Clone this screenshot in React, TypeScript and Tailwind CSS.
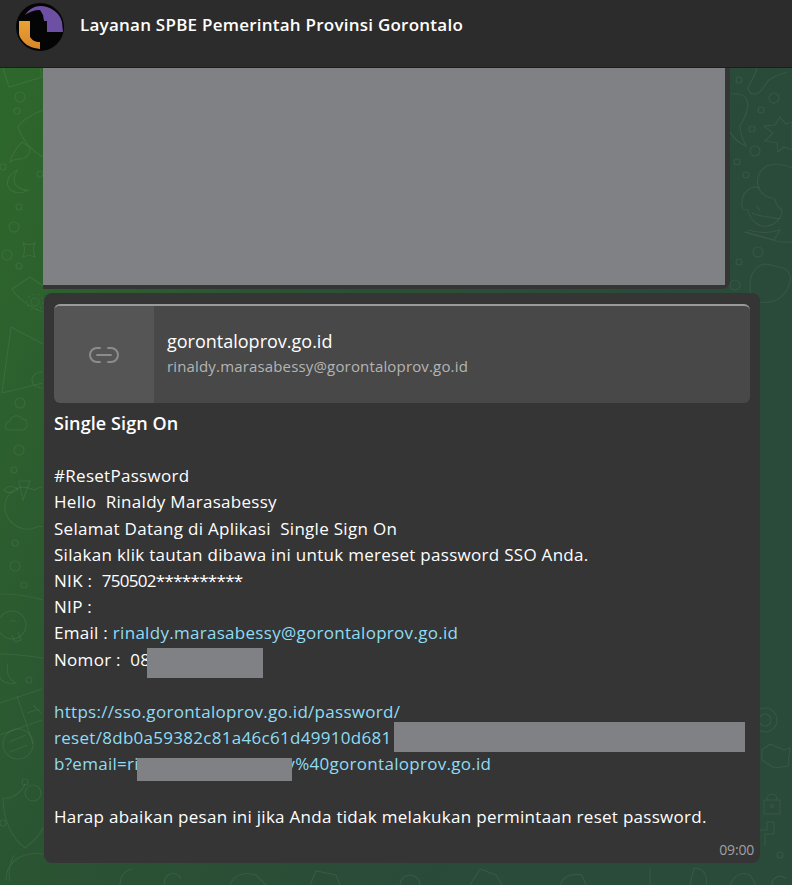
const font = { fontFamily: '"Open Sans", "Noto Sans", sans-serif' };

function Doodles() {
  // wallpaper doodles, only the strips beside the bubbles can be seen
  return (
    <svg className="absolute inset-0 h-full w-full" aria-hidden="true">
      <g transform="translate(0 -68)" fill="none" stroke="#ffffff" strokeOpacity="0.07" strokeWidth="1.1">
        {/* left strip */}
        <path d="M3 68l6 19 33-10-2-9" />
        <circle cx="20" cy="97" r="5" />
        <circle cx="17" cy="111" r="3" />
        <path d="M43 110c-10 4-20 10-25 16 3 12 12 24 25 31" />
        <path d="M10 162c2-8 6-14 12-20 2 2 6 2 8 8-1 6-6 10-12 9-3 0-5 1-8 3z" />
        <path d="M18 170c-8 3-12 10-10 16 3 7 12 9 20 4-8 0-14-4-14-10 0-4 2-8 4-10z" />
        <circle cx="3" cy="167" r="3" />
        <circle cx="40" cy="174" r="3" />
        <circle cx="19" cy="207" r="3" />
        <circle cx="14" cy="227" r="5" />
        <path d="M23 243c4 2 8 2 12 0-2 4-2 9 0 14-4-2-8-2-12 0 2-5 2-10 0-14z" />
        <circle cx="7" cy="255" r="5" />
        <circle cx="19" cy="266" r="3" />
        <path d="M43 312c-12-4-26-14-31-23l18-12 13 9" />
        <circle cx="35" cy="302" r="4" />
        <circle cx="35" cy="302" r="8" strokeDasharray="2 3" />
        <path d="M11 327L2 393l41-10M11 327l32 17" />
        <path d="M43 372c-6 0-11 3-11 8s5 8 11 8" />
        <circle cx="20" cy="403" r="5" />
        <path d="M9 430c-5-1-5-8 1-9 1-6 10-7 12-2 6-1 7 9 1 11z" />
        <circle cx="19" cy="450" r="5" />
        <circle cx="14" cy="470" r="3" />
        <path d="M18 488c-10 4-16 14-12 26 5 12 18 18 28 14 4-2 7-2 9-1M18 488c6-2 12 0 16 2 3-2 6-3 9-3" />
        <path d="M19 481l11 0-7 19zM4 490c4-5 10-4 14-1-3 4-10 5-14 1z" />
        <circle cx="15" cy="543" r="3" />
        <circle cx="15" cy="566" r="5" />
        <circle cx="24" cy="585" r="3" />
        <path d="M0 594c14 0 30 2 43 6" />
        <circle cx="12" cy="625" r="14" />
        <path d="M10 622c2-2 4-2 6 0M18 632l3 8-6 2-3-7" />
        <path d="M0 654c14 0 30 2 43 4" />
        <path d="M8 663c-2 8 0 16 8 20-8 2-16-2-16-6" />
        <circle cx="29" cy="680" r="3" />
        <path d="M0 703l42-14M0 735l42-15M17 696l16 48M33 705l8 8M27 713l12-4" />
        <circle cx="18" cy="744" r="15" />
        <path d="M9 742l17-7M10 752l17-7" />
        <circle cx="25" cy="782" r="3" />
        <circle cx="33" cy="793" r="8" />
        <path d="M3 798c10 2 20-8 22-14M3 798c0 20 8 40 22 50 8-6 14-12 18-20" />
        <circle cx="3" cy="823" r="3" />
        <path d="M6 880c0-16 12-24 24-26 5-1 10-1 13 0M14 855c-4 8-6 18-4 26" />
        {/* right strip */}
        <path d="M757 68c-2 8-9 18-9 20s2 7 8 6c8-3 8-10 13-14 5-4 12-6 18-8" />
        <circle cx="739" cy="80" r="3" />
        <circle cx="774" cy="98" r="5" />
        <circle cx="761" cy="110" r="3" />
        <path d="M731 94c14-2 20 6 15 20-2 6-5 9-6 12 0 5 3 14 6 20-6-2-13-8-16-14" />
        <circle cx="752" cy="129" r="3" />
        <path d="M780 117l6 7 6-2v28l-8-3-6 5-1-9-12-2 8-8-9-7 11-1z" />
        <circle cx="755" cy="151" r="5" />
        <circle cx="737" cy="162" r="3" />
        <circle cx="746" cy="175" r="3" />
        <path d="M792 168c-8-4-22-6-28 0-7 6-9 16-3 24 4 4 8 6 12 6" />
        <path d="M760 188c-10-4-18 6-18 14-1 6 2 8 6 8 2 10 10 18 20 16 8-2 14-8 14-16-4-2-6-6-8-12" />
        <path d="M756 205l4 6M752 213c8 4 20 4 28 6M748 230c14 4 26 2 32 0l-6 10-28-8M744 232l36 10 12 0" />
        <circle cx="758" cy="252" r="5" />
        <circle cx="739" cy="262" r="3" />
        <circle cx="735" cy="285" r="5" />
        <path d="M764 264c-8 2-14 10-14 20 0 8 0 16 10 18 16 2 26-6 30-20 2-10-4-14-12-15-6-2-9-3-14-3z" />
        <circle cx="765" cy="720" r="12" />
        <circle cx="765" cy="720" r="6" />
        <path d="M762 750l8-6 14 6 6-2-2 18-14 2-12-8z" />
        <path d="M764 800v14h16v-14zM767 800c0-8 10-8 10 0" />
        <circle cx="772" cy="806" r="1.5" />
        <path d="M760 830h7v-8h7v12h-9v12" />
        <circle cx="780" cy="855" r="3" />
        <path d="M650 885v-17M690 885l4-17c10 0 14 8 12 17M730 885c4-10 12-14 20-10l6 10M772 885a8 8 0 0 1 14-6" />
        <path d="M120 885c0-8 4-14 12-16M165 885a8 8 0 1 1 16-6M230 885c4-10 14-14 26-10l10 10M310 885l6-14 20 4 4 10M400 885a10 10 0 0 1 20 0M470 885l10-16 16 6 6 10M560 885c4-10 12-12 22-10l4 10" />
      </g>
    </svg>
  );
}

function Logo() {
  return (
    <svg width="48" height="48" viewBox="0 0 48 48" className="shrink-0">
      <defs>
        <linearGradient id="orange" x1="0" y1="0" x2="0" y2="1">
          <stop offset="0" stopColor="#e9a232" />
          <stop offset="1" stopColor="#d8862c" />
        </linearGradient>
      </defs>
      <circle cx="24" cy="24" r="24" fill="#050505" />
      <path d="M9 12C13 6 19 3 24 3c11 0 20 7 22 16l1 10H31V18h-3l-1-6-3-5c-6 0-11 2-15 5z" fill="#6d4fa3" />
      <path d="M3 18h11v16c2 3 5 5 10 5v7c-6-1-10-2-13-4-5-4-8-8-8-12z" fill="url(#orange)" />
    </svg>
  );
}

function Redact({ className }: { className: string }) {
  return <span className={`absolute bg-[#808184] ${className}`} />;
}

export default function App() {
  return (
    <div className="flex h-[885px] w-[792px] flex-col overflow-hidden" style={font}>
      <header className="flex h-[68px] shrink-0 items-start border-b border-[#1c1c1c] bg-[#2c2c2c] pl-4 pt-[3px]">
        <Logo />
        <h1 className="ml-4 mt-[11px] text-[17px] font-semibold leading-[22px] tracking-[0.24px] text-white">
          Layanan SPBE Pemerintah Provinsi Gorontalo
        </h1>
      </header>

      <main className="relative flex flex-1 flex-col items-start bg-[linear-gradient(112deg,#2e682b_0%,#2a5233_35%,#2a4a3a_70%)] pl-[43px]">
        <Doodles />

        <div className="relative w-[687px] rounded-br-lg bg-[#353535] pb-[4px] pr-[5px]">
          <div className="h-[217px] bg-[#808184]" />
        </div>

        <article className="relative ml-px mt-[4px] w-[716px] rounded-lg bg-[#353535] pl-[10px] pr-[6px] pb-[5px] pt-[11px]">
          <div className="mr-[4px] flex h-[99px] overflow-hidden rounded-md border-t-2 border-[#9a9a9a] bg-[#484848]">
            <div className="flex w-[100px] shrink-0 items-center justify-center rounded-l-md bg-[#555555]">
              <svg width="32" height="20" viewBox="0 0 32 20" fill="none" stroke="#8c8c8c" strokeWidth="2" strokeLinecap="round">
                <path d="M12 3H9a7 7 0 0 0 0 14h3M20 3h3a7 7 0 0 1 0 14h-3M9 10h14" />
              </svg>
            </div>
            <div className="ml-[13px] flex flex-col pt-[23px]">
              <span className="text-[18px] leading-[24px] text-white">gorontaloprov.go.id</span>
              <span className="mt-[3px] text-[15px] leading-[20px] tracking-[0.16px] text-[#b4b4b4]">rinaldy.marasabessy@gorontaloprov.go.id</span>
            </div>
          </div>

          <div className="relative mt-[7px] text-[17px] leading-[26.2px] tracking-[0.29px] text-white">
            <p className="text-[18px] font-semibold tracking-[0.1px]">Single Sign On</p>
            <p className="mt-[27px]">#ResetPassword</p>
            <p>Hello&nbsp; Rinaldy Marasabessy</p>
            <p>Selamat Datang di Aplikasi&nbsp; Single Sign On</p>
            <p>Silakan klik tautan dibawa ini untuk mereset password SSO Anda.</p>
            <p>
              NIK :&nbsp; <span className="tracking-[-0.7px]">750502**********</span>
            </p>
            <p>NIP :</p>
            <p>
              Email : <span className="text-[#8fdcf4]">rinaldy.marasabessy@gorontaloprov.go.id</span>
            </p>
            <p>Nomor :&nbsp; 08</p>
            <p className="mt-[26.2px] text-[#8fdcf4]">https://sso.gorontaloprov.go.id/password/</p>
            <p className="text-[#8fdcf4]">reset/8db0a59382c81a46c61d49910d681</p>
            <p className="text-[#8fdcf4]">b?email=rinaldy.marasabessy%40gorontaloprov.go.id</p>
            <p className="mt-[26.2px]">Harap abaikan pesan ini jika Anda tidak melakukan permintaan reset password.</p>

            <Redact className="left-[93px] top-[238px] h-[30px] w-[116px]" />
            <Redact className="left-[340px] top-[312px] h-[30px] w-[351px]" />
            <Redact className="left-[83px] top-[348px] h-[23px] w-[155px]" />
          </div>

          <div className="mt-[12px] text-right text-[14px] leading-[16px] tracking-[-0.2px] text-[#a0a0a0]">09:00</div>
        </article>
      </main>
    </div>
  );
}
